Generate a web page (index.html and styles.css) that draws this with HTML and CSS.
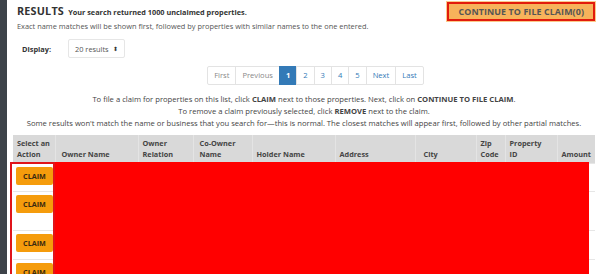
FILE: index.html
```html
<!DOCTYPE html>
<html lang="en">
<head>
<meta charset="utf-8">
<title>Results</title>
<link rel="stylesheet" href="styles.css">
</head>
<body>
<div class="page">
  <div class="strip"></div>
  <main class="main">
    <div class="top">
      <div class="intro">
        <div class="title"><span class="results">RESULTS</span> <span class="count">Your search returned 1000 unclaimed properties.</span></div>
        <p class="sub">Exact name matches will be shown first, followed by properties with similar names to the one entered.</p>
      </div>
      <button class="continue">CONTINUE TO FILE CLAIM(0)</button>
    </div>

    <div class="display">
      <span class="display-label">Display:</span>
      <span class="select">20 results <span class="caret">&#x2B0D;</span></span>
    </div>

    <nav class="pager-wrap">
      <ul class="pager">
        <li class="pg disabled">First</li>
        <li class="pg disabled">Previous</li>
        <li class="pg active">1</li>
        <li class="pg">2</li>
        <li class="pg">3</li>
        <li class="pg">4</li>
        <li class="pg">5</li>
        <li class="pg">Next</li>
        <li class="pg">Last</li>
      </ul>
    </nav>

    <div class="help">
      <p>To file a claim for properties on this list, click <b>CLAIM</b> next to those properties. Next, click on <b>CONTINUE TO FILE CLAIM</b>.</p>
      <p>To remove a claim previously selected, click <b>REMOVE</b> next to the claim.</p>
      <p>Some results won't match the name or business that you search for—this is normal. The closest matches will appear first, followed by other partial matches.</p>
    </div>

    <div class="table-wrap">
      <table class="grid">
        <colgroup>
          <col class="c1"><col class="c2"><col class="c3"><col class="c4"><col class="c5">
          <col class="c6"><col class="c7"><col class="c8"><col class="c9"><col class="c10">
        </colgroup>
        <thead>
          <tr>
            <th>Select an<br>Action</th>
            <th class="pl6">Owner Name</th>
            <th>Owner<br>Relation</th>
            <th class="pl6">Co-Owner<br>Name</th>
            <th>Holder Name</th>
            <th>Address</th>
            <th class="pl8">City</th>
            <th>Zip<br>Code</th>
            <th>Property<br>ID</th>
            <th class="right">Amount</th>
          </tr>
        </thead>
        <tbody>
          <tr class="r1"><td><button class="claim">CLAIM</button></td><td></td><td></td><td></td><td></td><td></td><td></td><td></td><td></td><td></td></tr>
          <tr class="r2"><td><button class="claim">CLAIM</button></td><td></td><td></td><td></td><td></td><td></td><td></td><td></td><td></td><td></td></tr>
          <tr class="r3"><td><button class="claim">CLAIM</button></td><td></td><td></td><td></td><td></td><td></td><td></td><td></td><td></td><td></td></tr>
          <tr class="r4"><td><button class="claim">CLAIM</button></td><td></td><td></td><td></td><td></td><td></td><td></td><td></td><td></td><td></td></tr>
        </tbody>
      </table>
      <div class="redact"></div>
      <div class="action-outline"></div>
    </div>
  </main>
</div>
</body>
</html>
```

FILE: styles.css
```css
* { box-sizing: border-box; }
html, body { margin: 0; padding: 0; background: #fff; }
body {
  font-family: "Open Sans", "Liberation Sans", sans-serif;
  color: #333;
  overflow: hidden;
  height: 274px;
}
.page { display: flex; min-height: 274px; }
.strip { width: 7px; background: #3d4349; flex: none; }
.main { flex: 1; padding: 0 5px 0 6px; }

.top { display: flex; justify-content: space-between; align-items: flex-start; padding-left: 4px; }
.intro { padding-top: 3px; }
.title { line-height: 13px; }
.results { font-size: 10.8px; font-weight: 700; letter-spacing: 0.2px; }
.count { font-size: 7.3px; font-weight: 700; }
.sub { margin: 2px 0 0; font-size: 7.4px; line-height: 10px; color: #555; }

.continue {
  margin-top: 2px;
  height: 19px;
  padding: 0 9px;
  background: #f7b35b;
  border: 2px solid #e21b0c;
  box-shadow: 0 0 0 1px #fbc98a;
  font-family: inherit;
  font-size: 8.9px;
  font-weight: 700;
  color: #555;
  letter-spacing: 0.1px;
}

.display { display: flex; align-items: center; margin-top: 8px; padding-left: 9px; height: 19px; }
.display-label { font-size: 7.4px; font-weight: 700; width: 46px; }
.select {
  display: inline-flex; align-items: center; gap: 4px;
  height: 19px; padding: 0 6px;
  border: 1px solid #e6e6e6; border-radius: 2px;
  font-size: 7.4px; color: #555;
}
.caret { font-size: 6px; color: #333; }

.pager-wrap { display: flex; justify-content: center; margin-top: 8px; padding-left: 24px; }
.pager { display: flex; list-style: none; margin: 0; padding: 0; }
.pg {
  height: 19px; line-height: 17px; padding: 0 6px;
  border: 1px solid #e3e3e3; margin-left: -1px;
  font-size: 7.6px; color: #337ab7;
}
.pg:first-child { border-radius: 2px 0 0 2px; }
.pg:last-child { border-radius: 0 2px 2px 0; }
.pg.disabled { color: #888; }
.pg.active { background: #337ab7; border-color: #337ab7; color: #fff; font-weight: 700; padding: 0 6px; }

.help { margin-top: 8px; text-align: center; font-size: 7.65px; line-height: 12px; color: #444; }
.help p { margin: 0; }

.table-wrap { position: relative; margin-top: 6px; width: 582px; }
.grid { border-collapse: collapse; table-layout: fixed; width: 582px; }
.c1 { width: 42px; } .c2 { width: 83px; } .c3 { width: 55px; } .c4 { width: 59px; }
.c5 { width: 83px; } .c6 { width: 80px; } .c7 { width: 61px; } .c8 { width: 29px; }
.c9 { width: 52px; } .c10 { width: 38px; }
.grid th {
  background: #d9d9d9;
  border-right: 1px solid #e4e4e4;
  text-align: left; vertical-align: bottom;
  font-size: 7.3px; font-weight: 700; line-height: 10.5px; color: #444;
  padding: 3px 1px 4px 4px;
  height: 27px;
  white-space: nowrap;
  overflow: hidden;
}
.grid th:last-child { border-right: none; }
.grid th.pl6 { padding-left: 6px; }
.grid th.pl8 { padding-left: 8px; }
.grid th.right { text-align: right; padding-right: 5px; }
.grid td { border-top: 1px solid #e6e6e6; vertical-align: top; padding: 3px 3px 0; font-size: 7px; line-height: 0; }
.r1 td { height: 28px; }
.r2 td { height: 39px; }
.r3 td { height: 29px; }
.r4 td { height: 30px; }
.claim {
  display: block;
  width: 37px; height: 18px;
  background: #f59c0c; border: none; border-radius: 2px;
  font-family: inherit; font-size: 7.2px; font-weight: 700; color: #3a2a10; line-height: 18px;
  padding: 0;
}
.redact { position: absolute; left: 42px; right: 6px; top: 27px; bottom: 0; background: #ff0000; }
.action-outline { position: absolute; left: -3px; width: 45px; top: 27px; bottom: 0; border: 2px solid #e0141a; }
```
